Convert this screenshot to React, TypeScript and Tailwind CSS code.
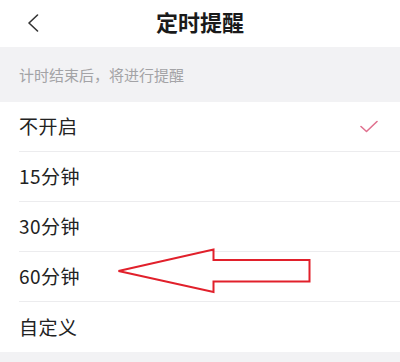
import React from "react";

const OPTIONS = ["不开启", "15分钟", "30分钟", "60分钟", "自定义"];

function Check() {
  return (
    <svg width="18" height="13" viewBox="0 0 18 13" fill="none">
      <path d="M1 6.5 L6.5 11.5 L17 1.5" stroke="#e0718f" strokeWidth="1.6" strokeLinecap="round" strokeLinejoin="round" />
    </svg>
  );
}

export default function App() {
  return (
    <div
      className="w-[400px] h-[362px] bg-[#f2f2f4] overflow-hidden relative"
      style={{ fontFamily: '"Noto Sans CJK SC", "Noto Sans", sans-serif' }}
    >
      {/* header */}
      <div className="h-[47px] bg-white relative flex items-center justify-center">
        <svg className="absolute left-[27px] top-[14px]" width="12" height="18" viewBox="0 0 12 18" fill="none">
          <path d="M10.5 1 L2 9 L10.5 17" stroke="#333" strokeWidth="1.6" strokeLinecap="round" strokeLinejoin="round" />
        </svg>
        <span className="text-[22px] font-bold text-[#1a1a1a] leading-none -mt-[6px]">定时提醒</span>
      </div>

      {/* hint */}
      <div className="h-[55px] flex items-center pl-[19px] pt-[2px]">
        <span className="text-[15px] text-[#a3a3a6]">计时结束后，将进行提醒</span>
      </div>

      {/* options */}
      <div className="bg-white pl-[19px]">
        {OPTIONS.map((label, i) => (
          <div
            key={label}
            className={
              "h-[50px] flex items-center justify-between pr-[22px] " +
              (i < OPTIONS.length - 1 ? "border-b border-[#ececee]" : "")
            }
          >
            <span className="text-[19px] text-[#222] tracking-[0.5px]">{label}</span>
            {i === 0 && <Check />}
          </div>
        ))}
      </div>

      {/* annotation arrow */}
      <svg className="absolute left-0 top-0 pointer-events-none" width="400" height="362" viewBox="0 0 400 362" fill="none">
        <polygon
          points="118.5,271 213.5,249.5 213.5,260 309.5,260 309.5,281.5 213.5,281.5 213.5,292"
          stroke="#e1202b"
          strokeWidth="2"
          strokeLinejoin="miter"
        />
      </svg>
    </div>
  );
}
